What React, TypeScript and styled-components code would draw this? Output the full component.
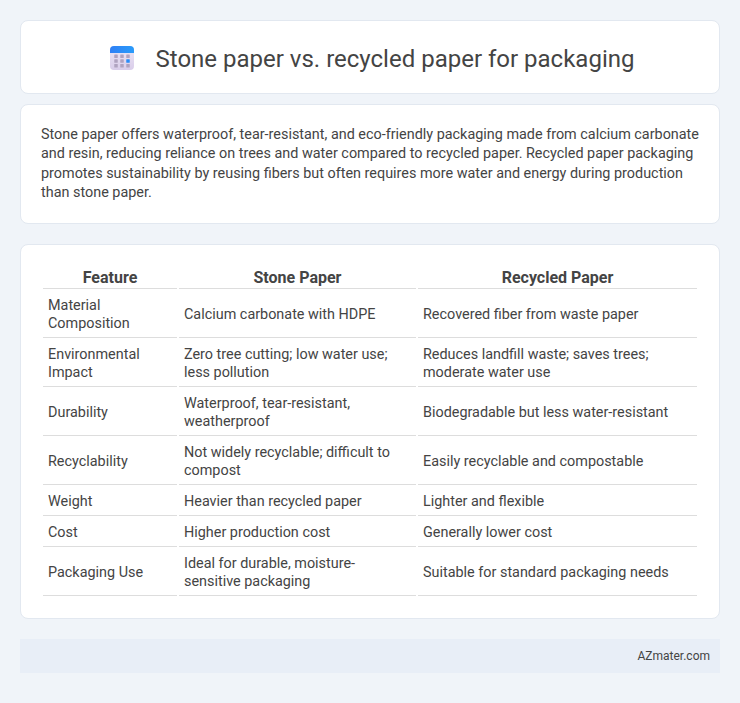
import React from 'react';
import styled, { createGlobalStyle } from 'styled-components';

const Global = createGlobalStyle`
  html, body { margin: 0; padding: 0; background: #f0f4f9; }
  body { font-family: Roboto, "Noto Sans", sans-serif; color: #444; }
`;
const Page = styled.div`
  padding: 20px 20px 30px;
  display: flex;
  flex-direction: column;
`;
const Card = styled.section<{ $mb: number }>`
  background: #fff;
  border: 1px solid #e2e8f0;
  border-radius: 8px;
  margin-bottom: ${p => p.$mb}px;
`;
const Header = styled(Card)`
  display: flex;
  align-items: center;
  justify-content: center;
  gap: 22px;
  padding-left: 4px;
  box-sizing: border-box;
  height: 74px;
`;
const IconWrap = styled.span`
  display: block;
  width: 24px;
  height: 24px;
  margin-top: 2px;
`;
const Title = styled.h1`
  margin: 3px 0 0;
  font-size: 24px;
  font-weight: 400;
  line-height: 32px;
  color: #444;
`;
const Intro = styled(Card)`
  padding: 20px;
  box-sizing: border-box;
  height: 120px;
`;
const IntroText = styled.p`
  margin: 0;
  font-size: 14.4px;
  line-height: 1.35;
  color: #444;
`;
const TableCard = styled(Card)`
  padding: 20px;
`;
const Table = styled.table`
  width: 100%;
  border-collapse: separate;
  border-spacing: 2px;
  table-layout: fixed;
  font-size: 14.4px;
  line-height: 18px;
`;
const Th = styled.th`
  font-weight: 700;
  font-size: 16px;
  color: #444;
  text-align: center;
  padding: 2px 5px 1px;
  border-bottom: 1px solid #ddd;
`;
const Td = styled.td`
  padding: 6px 5px 4px;
  color: #444;
  border-bottom: 1px solid #ddd;
  vertical-align: middle;
`;
const Footer = styled.footer`
  background: #e8eef7;
  height: 34px;
  display: flex;
  align-items: center;
  justify-content: flex-end;
  padding: 0 10px;
  font-size: 12px;
  color: #444;
`;

const CalendarIcon = () => (
  <svg width="24" height="24" viewBox="0 0 24 24" aria-hidden="true">
    <defs>
      <linearGradient id="bodyGrad" x1="0" y1="0" x2="0" y2="1">
        <stop offset="0" stopColor="#eee8f6" />
        <stop offset="1" stopColor="#d9cdea" />
      </linearGradient>
      <linearGradient id="topGrad" x1="0" y1="0" x2="1" y2="0">
        <stop offset="0" stopColor="#2f80f5" />
        <stop offset="1" stopColor="#2a9bfa" />
      </linearGradient>
    </defs>
    <rect x="0" y="0" width="24" height="24" rx="4" fill="url(#bodyGrad)" />
    <path d="M0 7V4a4 4 0 0 1 4-4h16a4 4 0 0 1 4 4v3z" fill="url(#topGrad)" />
    {[4.25, 10.25, 16.25].map(x =>
      [8.5, 13.25, 18].map(y => (
        <rect
          key={`${x}-${y}`}
          x={x}
          y={y}
          width="3.5"
          height="3.5"
          rx="0.5"
          fill={x === 16.25 && y === 13.25 ? '#2a8cf7' : '#b0a3c0'}
        />
      ))
    )}
  </svg>
);

const rows = [
  ['Material Composition', 'Calcium carbonate with HDPE', 'Recovered fiber from waste paper'],
  ['Environmental Impact', 'Zero tree cutting; low water use; less pollution', 'Reduces landfill waste; saves trees; moderate water use'],
  ['Durability', 'Waterproof, tear-resistant, weatherproof', 'Biodegradable but less water-resistant'],
  ['Recyclability', 'Not widely recyclable; difficult to compost', 'Easily recyclable and compostable'],
  ['Weight', 'Heavier than recycled paper', 'Lighter and flexible'],
  ['Cost', 'Higher production cost', 'Generally lower cost'],
  ['Packaging Use', 'Ideal for durable, moisture-sensitive packaging', 'Suitable for standard packaging needs'],
];

export default function App() {
  return (
    <Page>
      <Global />
      <Header as="header" $mb={10}>
        <IconWrap>
          <CalendarIcon />
        </IconWrap>
        <Title>Stone paper vs. recycled paper for packaging</Title>
      </Header>
      <Intro $mb={20}>
        <IntroText>
          Stone paper offers waterproof, tear-resistant, and eco-friendly packaging made from calcium carbonate and resin, reducing reliance on trees and water compared to recycled paper. Recycled paper packaging promotes sustainability by reusing fibers but often requires more water and energy during production than stone paper.
        </IntroText>
      </Intro>
      <TableCard $mb={20}>
        <Table>
          <colgroup>
            <col style={{ width: 134 }} />
            <col style={{ width: 237 }} />
            <col style={{ width: 279 }} />
          </colgroup>
          <thead>
            <tr>
              <Th>Feature</Th>
              <Th>Stone Paper</Th>
              <Th>Recycled Paper</Th>
            </tr>
          </thead>
          <tbody>
            {rows.map(r => (
              <tr key={r[0]}>
                {r.map(c => (
                  <Td key={c}>{c}</Td>
                ))}
              </tr>
            ))}
          </tbody>
        </Table>
      </TableCard>
      <Footer>AZmater.com</Footer>
    </Page>
  );
}
